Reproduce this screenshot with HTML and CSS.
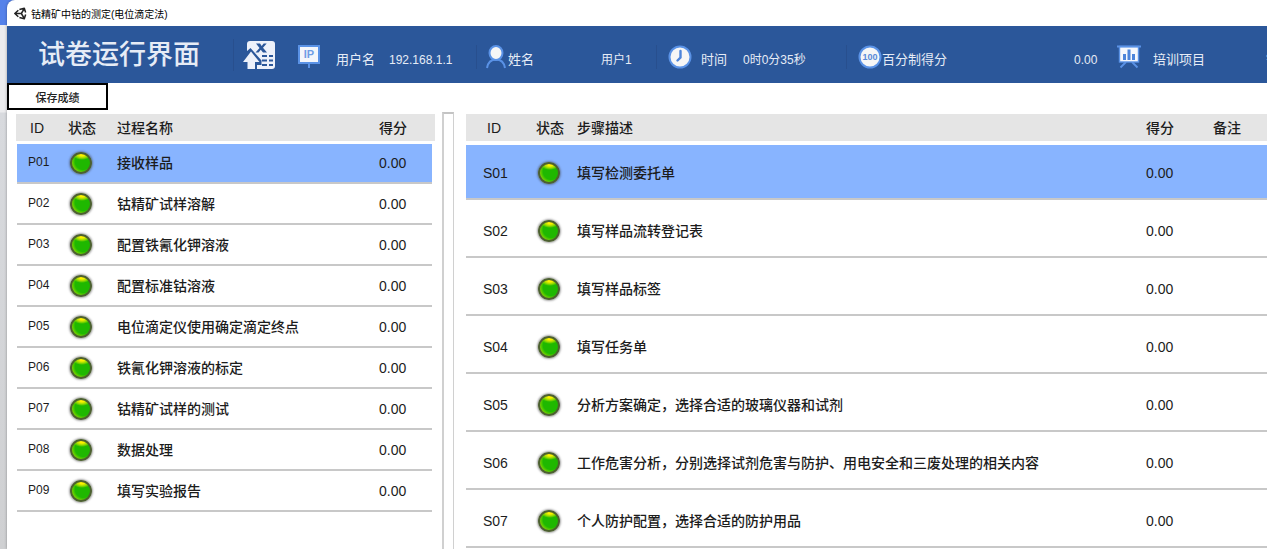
FILE: index.html
```html
<!DOCTYPE html>
<html lang="zh-CN">
<head>
<meta charset="utf-8">
<title>钴精矿中钴的测定(电位滴定法)</title>
<link rel="stylesheet" href="styles.css">
</head>
<body>
<div class="window">
  <div class="titlebar">
    <svg class="logo" viewBox="0 0 24 24" aria-hidden="true"><path d="M1.500 12 8 6M10 4.500 19 2.500 21.500 10M21.500 14 19 21.500 10 19.500M8 18 1.500 12H13.500M19 3 13.500 12 19 21" fill="none" stroke="#222" stroke-width="2.800" stroke-linejoin="round"/></svg>
    <span>钴精矿中钴的测定(电位滴定法)</span>
  </div>
  <header class="header">
    <h1 class="heading">试卷运行界面</h1>
    <button class="export" type="button" aria-label="导出">
      <svg width="34" height="30" viewBox="0 0 34 30"><rect x="5" y="1" width="28" height="28" rx="3" fill="#edf1fa"/><path d="M4 12 8.500 8 19.500 20.500V25H15V30H4Z" fill="#2b579a"/><path d="M9 11.500 17.500 22H13V29H5.500V22H1Z" fill="#edf1fa"/><path d="M14 3.500h4l1.700 2.500 2-2.500h3L21 7.800l4 4.700h-4l-2.200-2.800-2.300 2.800H13.500L17.500 8Z" fill="#2b579a"/><path d="M20 16h5M27 16h4M20 20.500h5M27 20.500h4M20 25h5M27 25h4" stroke="#2b579a" stroke-width="2"/></svg>
    </button>
    <dl class="info">
      <div class="item item-ip">
        <svg width="22" height="24" viewBox="0 0 22 24"><path d="M11 18v5" stroke="#5a92e6" stroke-width="2"/><rect x="1" y="1" width="20" height="17" fill="#f4f6fb" stroke="#5a92e6" stroke-width="2"/><text x="11" y="13" text-anchor="middle" class="ip-text">IP</text></svg>
        <dt>用户名</dt><dd>192.168.1.1</dd>
      </div>
      <div class="item item-name">
        <svg width="20" height="24" viewBox="0 0 20 24"><path d="M1 23C2 17 6 14.500 10 14.500S18 17 19 23" fill="none" stroke="#5a92e6" stroke-width="2"/><ellipse cx="10" cy="8" rx="6.500" ry="7" fill="#f6f6f6" stroke="#5a92e6" stroke-width="2"/></svg>
        <dt>姓名</dt><dd>用户1</dd>
      </div>
      <div class="item item-time">
        <svg width="24" height="24" viewBox="0 0 24 24"><circle cx="12" cy="12" r="10.500" fill="#f6f6f6" stroke="#5a92e6" stroke-width="2"/><path d="M12.500 6v6.500L9.500 15.500" fill="none" stroke="#4d84da" stroke-width="2.400" stroke-linecap="round"/></svg>
        <dt>时间</dt><dd>0时0分35秒</dd>
      </div>
      <div class="item item-score">
        <svg width="24" height="24" viewBox="0 0 24 24"><circle cx="12" cy="12" r="10.500" fill="#f6f6f6" stroke="#5a92e6" stroke-width="2"/><text x="12" y="15" text-anchor="middle" class="hundred-text">100</text></svg>
        <dt>百分制得分</dt><dd>0.00</dd>
      </div>
      <div class="item item-project">
        <svg width="24" height="24" viewBox="0 0 24 24"><path d="M9 17 3.500 22.500M15 17l5.500 5.500" stroke="#5a92e6" stroke-width="1.800"/><rect x="2.500" y="1.500" width="19" height="15.500" fill="#f6f8fd" stroke="#5a92e6" stroke-width="1.400"/><path d="M0 1.500h24" stroke="#5a92e6" stroke-width="2"/><path d="M7.500 9V15M12 4.500V15M16.500 9V15" stroke="#4d84da" stroke-width="3"/></svg>
        <dt>培训项目</dt><dd>钴精矿中钴的测定</dd>
      </div>
    </dl>
  </header>
  <button class="save" type="button">保存成绩</button>
  <main class="panels">
    <table class="list processes">
      <thead><tr><th class="id">ID</th><th class="state">状态</th><th>过程名称</th><th class="score">得分</th></tr></thead>
      <tbody>
        <tr class="selected"><td class="id">P01</td><td class="state"><span class="lamp"></span></td><td class="name">接收样品</td><td class="score">0.00</td></tr>
        <tr><td class="id">P02</td><td class="state"><span class="lamp"></span></td><td class="name">钴精矿试样溶解</td><td class="score">0.00</td></tr>
        <tr><td class="id">P03</td><td class="state"><span class="lamp"></span></td><td class="name">配置铁氰化钾溶液</td><td class="score">0.00</td></tr>
        <tr><td class="id">P04</td><td class="state"><span class="lamp"></span></td><td class="name">配置标准钴溶液</td><td class="score">0.00</td></tr>
        <tr><td class="id">P05</td><td class="state"><span class="lamp"></span></td><td class="name">电位滴定仪使用确定滴定终点</td><td class="score">0.00</td></tr>
        <tr><td class="id">P06</td><td class="state"><span class="lamp"></span></td><td class="name">铁氰化钾溶液的标定</td><td class="score">0.00</td></tr>
        <tr><td class="id">P07</td><td class="state"><span class="lamp"></span></td><td class="name">钴精矿试样的测试</td><td class="score">0.00</td></tr>
        <tr><td class="id">P08</td><td class="state"><span class="lamp"></span></td><td class="name">数据处理</td><td class="score">0.00</td></tr>
        <tr><td class="id">P09</td><td class="state"><span class="lamp"></span></td><td class="name">填写实验报告</td><td class="score">0.00</td></tr>
      </tbody>
    </table>
    <div class="divider"></div>
    <table class="list steps">
      <thead><tr><th class="id">ID</th><th class="state">状态</th><th>步骤描述</th><th class="score">得分</th><th class="note">备注</th></tr></thead>
      <tbody>
        <tr class="selected"><td class="id">S01</td><td class="state"><span class="lamp"></span></td><td class="name">填写检测委托单</td><td class="score">0.00</td><td></td></tr>
        <tr><td class="id">S02</td><td class="state"><span class="lamp"></span></td><td class="name">填写样品流转登记表</td><td class="score">0.00</td><td></td></tr>
        <tr><td class="id">S03</td><td class="state"><span class="lamp"></span></td><td class="name">填写样品标签</td><td class="score">0.00</td><td></td></tr>
        <tr><td class="id">S04</td><td class="state"><span class="lamp"></span></td><td class="name">填写任务单</td><td class="score">0.00</td><td></td></tr>
        <tr><td class="id">S05</td><td class="state"><span class="lamp"></span></td><td class="name">分析方案确定，选择合适的玻璃仪器和试剂</td><td class="score">0.00</td><td></td></tr>
        <tr><td class="id">S06</td><td class="state"><span class="lamp"></span></td><td class="name">工作危害分析，分别选择试剂危害与防护、用电安全和三废处理的相关内容</td><td class="score">0.00</td><td></td></tr>
        <tr><td class="id">S07</td><td class="state"><span class="lamp"></span></td><td class="name">个人防护配置，选择合适的防护用品</td><td class="score">0.00</td><td></td></tr>
      </tbody>
    </table>
  </main>
</div>
</body>
</html>
```
FILE: styles.css
```css
* { box-sizing: border-box; }

body {
  margin: 0;
  min-height: 100vh;
  padding-left: 7px;
  overflow: hidden;
  display: flex;
  background: linear-gradient(#5582ea 25px, #ececee 25px, #ececee 112px, #d8dade 113px, #cfd0d2);
  font-family: "Liberation Sans", "Noto Sans CJK SC", sans-serif;
  font-size: 14px;
  color: #1c1c1c;
}

.window {
  flex: 1;
  min-width: 0;
  display: flex;
  flex-direction: column;
  background: #fff;
  border-top-left-radius: 8px;
  box-shadow: 0 0 3px rgba(0, 0, 0, .35);
}

.titlebar {
  height: 26px;
  flex: none;
  display: flex;
  align-items: center;
  gap: 4px;
  padding-left: 7px;
  font-size: 10px;
  color: #000;
}

.logo { width: 13px; height: 13px; }

.header {
  height: 57px;
  flex: none;
  display: flex;
  align-items: center;
  overflow: hidden;
  background: #2b579a;
  color: #e6ecf6;
}

.heading {
  flex: none;
  width: 227px;
  margin: 0;
  padding-left: 31px;
  border-right: 1px solid #284f8e;
  font-size: 27px;
  font-weight: 500;
  line-height: 32px;
}

.export {
  flex: none;
  display: flex;
  margin: 0 22px 0 8px;
  padding: 0;
  border: 0;
  background: none;
}

.info {
  flex: 1;
  min-width: 0;
  display: flex;
  margin: 0;
  padding-top: 5px;
}

.item {
  flex: none;
  display: flex;
  align-items: center;
  height: 24px;
  white-space: nowrap;
}

.item + .item { border-left: 1px solid #284f8e; }
.item svg { flex: none; }
.item dt { flex: none; padding-top: 5px; font-size: 13px; line-height: 18px; }
.item dd { margin: 0; padding-top: 5px; font-size: 12px; line-height: 18px; }

.item-ip { width: 178px; }
.item-ip dt { width: 69px; padding-left: 16px; }
.item-name { width: 180px; padding-left: 9px; }
.item-name dt { width: 95px; padding-left: 2px; }
.item-time { width: 190px; padding-left: 11px; }
.item-time dt { width: 51px; padding-left: 9px; }
.item-score { width: 260px; padding-left: 11px; }
.item-score dt { width: 192px; }
.item.item-project { padding-left: 11px; border: 0; }
.item-project dt { width: 125px; padding-left: 12px; }

.ip-text { font-size: 11px; font-weight: 700; fill: #6f9de6; }
.hundred-text { font-size: 9px; font-weight: 700; fill: #5a8ad8; }

.save {
  align-self: flex-start;
  flex: none;
  width: 101px;
  height: 27px;
  padding: 0;
  border: 2px solid #000;
  background: #fff;
  color: #222;
  font-family: inherit;
  font-size: 11px;
  font-weight: 500;
}

.panels {
  flex: 1;
  display: flex;
  align-items: flex-start;
  padding: 2px 0 0 9px;
}

.list {
  margin-top: 2px;
  table-layout: fixed;
  border-collapse: separate;
  border-spacing: 0;
}

.list th, .list td {
  padding: 0;
  text-align: left;
  vertical-align: middle;
  font-weight: 500;
  white-space: nowrap;
}

.list th {
  height: 30px;
  padding-bottom: 2px;
  border-bottom: 3px solid #fff;
  background: #e5e5e5;
}

.list th.id { padding-bottom: 0; }

.list td {
  background-clip: padding-box;
  box-shadow: inset 0 -2px #c8c8c8;
}

.list .selected td { background-color: #88b4ff; }

.lamp {
  display: block;
  width: 22px;
  height: 22px;
  margin-left: 2px;
  border: 2px solid #4c6030;
  border-radius: 50%;
  background:
    radial-gradient(ellipse 9px 5px at 55% 5%, #fff200 20%, rgba(190, 230, 0, .8) 60%, transparent),
    radial-gradient(circle at 62% 42%, #1fb800 8px, #8fdc00 12px, #d8f000 14px);
  box-shadow: 0 0 2px 1px rgba(60, 60, 60, .45);
}

.processes { flex: none; width: 419px; }
.processes td { height: 41px; padding-bottom: 2px; }
.processes .selected td { height: 40px; }
.processes td:first-child { border-left: 1px solid transparent; }
.processes td:last-child { border-right: 3px solid transparent; }
.processes td.name { padding-bottom: 4px; }
.processes .id { width: 52px; padding-left: 14px; }
.processes td.id { padding: 0 0 4px 11px; font-size: 12px; }
.processes .state { width: 49px; }
.processes .score { width: 56px; }

.divider {
  align-self: stretch;
  flex: none;
  width: 12px;
  margin: 0 12px 0 7px;
  border: 1px solid #cfcfcf;
  border-width: 2px 1px 0 2px;
  border-color: #c4c4c4 #d0d0d0;
}

.steps { flex: 1; min-width: 0; width: 100%; }
.steps th { height: 31px; border-bottom-width: 4px; }
.steps td { height: 58px; padding-top: 4px; }
.steps td.name { padding-bottom: 2px; }
.steps .selected td { height: 55px; padding-top: 0; }
.steps .id { width: 70px; padding-left: 21px; }
.steps td.id { padding-left: 17px; }
.steps .state { width: 41px; }
.steps .score { width: 67px; }
.steps .note { width: 54px; }
```
